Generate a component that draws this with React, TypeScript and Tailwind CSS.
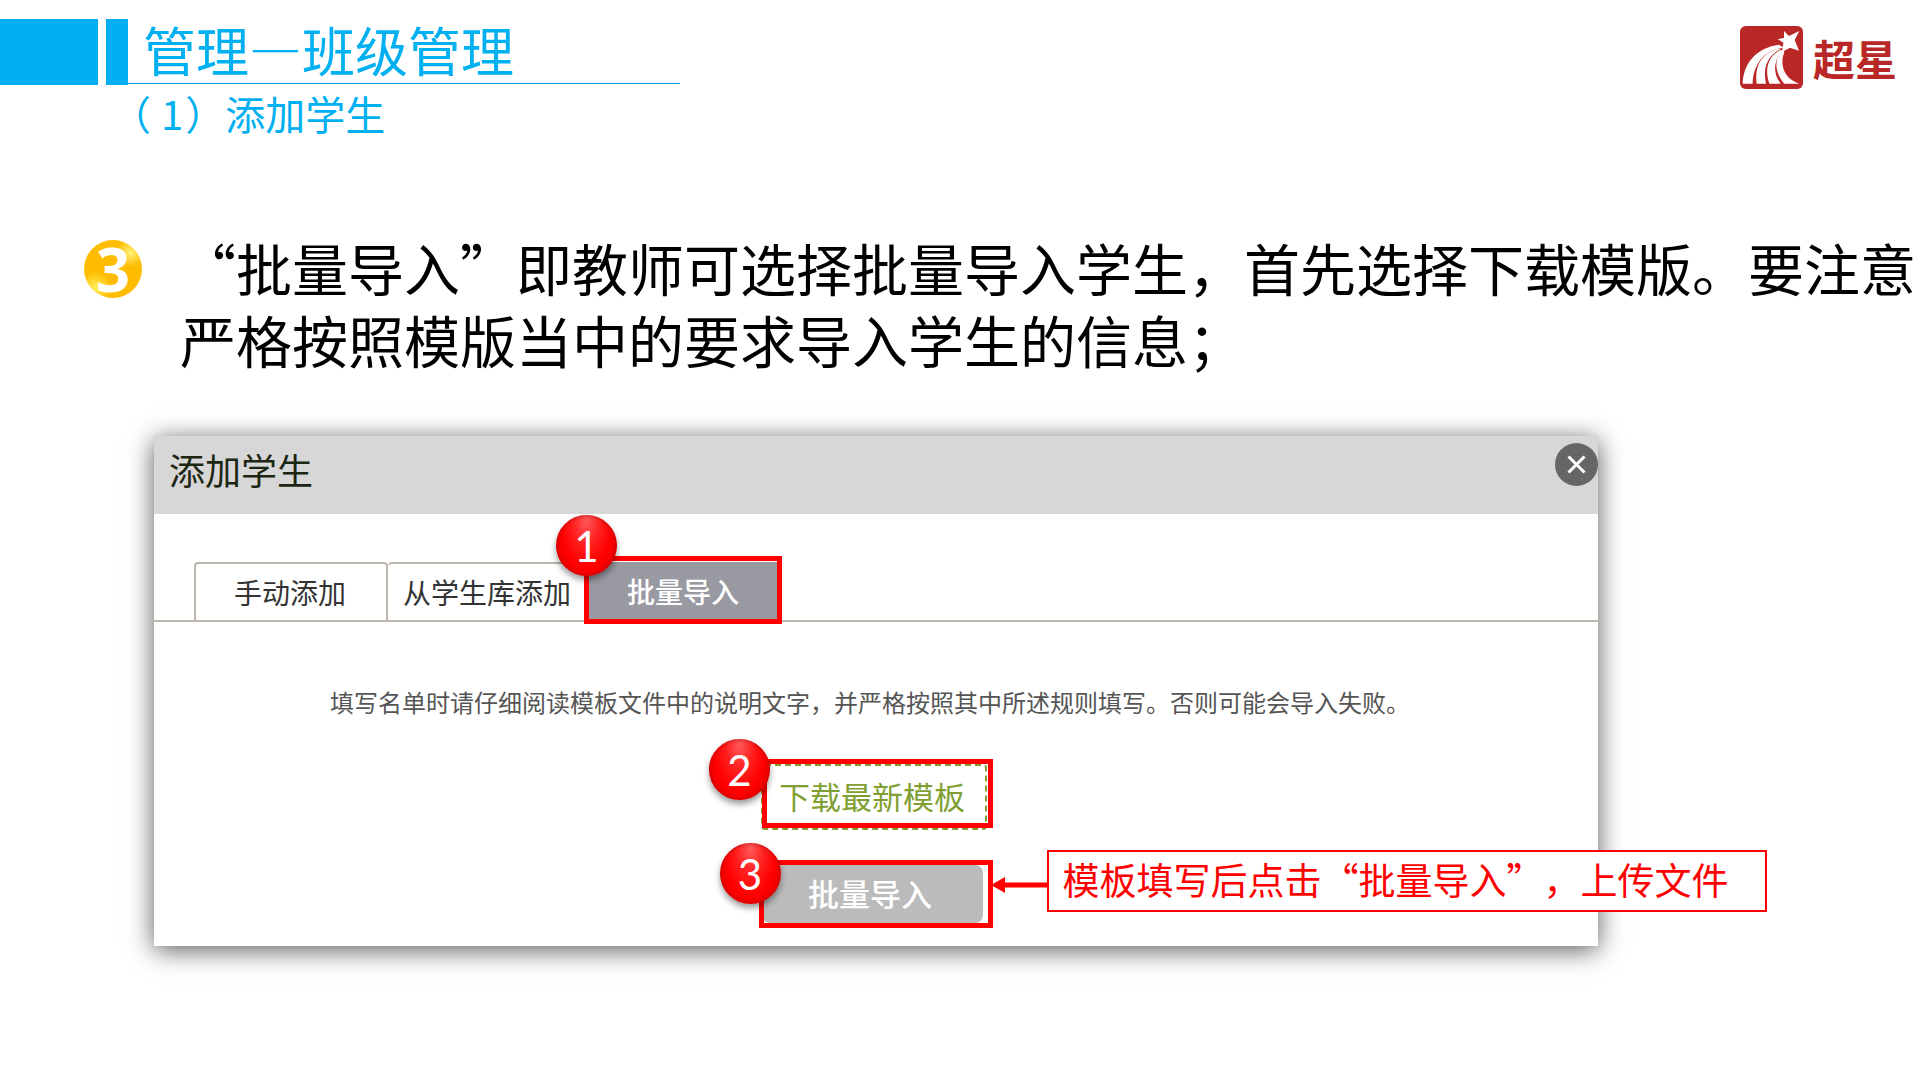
import React from 'react';

const BALL =
  'pointer-events-none absolute flex size-[61px] items-center justify-center rounded-full bg-[radial-gradient(ellipse_at_50%_8%,#ff5a5a_0%,#ff2020_32%,#ff0000_60%,#e60000_100%)] font-[Lato] text-[42px] leading-none text-white shadow-[0_4px_6px_rgba(0,0,0,0.4),inset_0_0_5px_rgba(150,0,0,0.7)]';

const FRAME = 'pointer-events-none absolute border-5 border-[#ff0000]';

function Logo() {
  return (
    <div className="mt-[7px] mr-[23px] flex items-center gap-2.5 text-[#b92827]" aria-label="超星">
      <svg className="size-[63px]" viewBox="0 0 189 189" aria-hidden="true">
        <rect width="189" height="189" rx="17" fill="#b92827" />
        <g fill="#fff">
          <path d="M132 15 L147 30 L178 15 L164 42 L177 74 L150 65 L126 78 L130 50 L113 39 L132 36 Z" />
          <path d="M8 173 C10 116 44 66 118 56 L131 66 C80 70 40 106 38 173 Z" />
          <path d="M50 173 C43 122 62 84 112 69 L121 69 C80 92 68 128 78 173 Z" />
          <path d="M88 173 C72 128 86 90 122 71 L127 76 C100 104 98 142 122 173 Z" />
          <path d="M133 173 C100 134 104 98 128 72 L133 78 C118 118 132 158 178 173 Z" />
        </g>
      </svg>
      <span className="text-[42px] leading-[63px] font-bold">超星</span>
    </div>
  );
}

function Header() {
  return (
    <header className="flex items-start justify-between pt-[19px]">
      <div>
        <div className="flex">
          <div className="h-[66px] w-[98px] bg-[#00b0f0]" />
          <div className="ml-2 h-[66px] w-[22px] bg-[#00b0f0]" />
          <h1 className="flex h-[65px] w-[552px] items-center border-b border-[#00a2dc] pb-1 pl-[15px] text-[53px] leading-[60px]">
            管理—班级管理
          </h1>
        </div>
        <h2 className="pl-[111px] text-[40px] leading-[56px]">
          （<span className="pr-0.5 pl-2.5">1</span>）添加学生
        </h2>
      </div>
      <Logo />
    </header>
  );
}

function AddStudentDialog() {
  return (
    <section
      aria-label="添加学生"
      className="mt-[61px] mr-[322px] ml-[154px] h-[510px] bg-white text-[#333] shadow-[0_4px_24px_rgba(0,0,0,0.65)]"
    >
      <div className="flex h-[78px] items-start justify-between bg-[#d7d7d7]">
        <h3 className="pl-[15px] text-[36px] leading-[66px] text-[#1c2612]">添加学生</h3>
        <button
          type="button"
          aria-label="关闭"
          className="mt-[7px] flex size-[43px] items-center justify-center rounded-full bg-[#666]"
        >
          <svg className="size-[19px]" viewBox="0 0 19 19" stroke="#fff" strokeWidth="3" aria-hidden="true">
            <path d="M1.5 1.5 L17.5 17.5 M17.5 1.5 L1.5 17.5" />
          </svg>
        </button>
      </div>

      <div role="tablist" className="mt-12 flex h-[60px] border-b-2 border-[#bdb6ab] pl-10 text-[28px] leading-none">
        <button
          type="button"
          role="tab"
          aria-selected="false"
          className="w-[194px] rounded-t-sm border-2 border-b-0 border-[#bdb6ab] pr-0.5"
        >
          手动添加
        </button>
        <button
          type="button"
          role="tab"
          aria-selected="false"
          className="w-[200px] rounded-t-sm border-t-2 border-[#bdb6ab] pr-0.5"
        >
          从学生库添加
        </button>
        <div className="relative flex">
          <button type="button" role="tab" aria-selected="true" className="w-[190px] bg-[#9899a1] font-medium text-white">
            批量导入
          </button>
          <span className={`${FRAME} -top-1.5 -right-1 -bottom-1 -left-1`} />
          <span className={`${BALL} -top-[47px] -left-8`}>1</span>
        </div>
      </div>

      <p className="mt-[62px] pr-3 text-center text-2xl leading-9 text-[#555]">
        填写名单时请仔细阅读模板文件中的说明文字，并严格按照其中所述规则填写。否则可能会导入失败。
      </p>

      <div className="mt-[44px] flex flex-col items-center gap-[35px] pr-1">
        <div className="relative">
          <a
            href="#template"
            className="flex h-[66px] w-[226px] items-center justify-center rounded border-2 border-dashed border-[#7f9f32] pr-1 pb-1 text-[31px] leading-none text-[#7f9f32]"
          >
            下载最新模板
          </a>
          <span className={`${FRAME} -top-[5px] -right-1.5 bottom-0.5 left-px`} />
          <span className={`${BALL} -top-[25px] -left-[52px]`}>2</span>
        </div>

        <div className="relative mr-1">
          <button
            type="button"
            className="flex h-[58px] w-[221px] items-center justify-center rounded-lg bg-[#bbb] pr-1 pb-1 text-[31px] leading-none font-medium text-white"
          >
            批量导入
          </button>
          <span className={`${FRAME} -top-[5px] -right-2.5 -bottom-[5px] -left-[3px]`} />
          <span className={`${BALL} -top-[22px] -left-[42px]`}>3</span>
          <div className="absolute -top-[15px] left-full flex w-max items-center pl-2">
            <svg className="mt-2 h-4 w-14" viewBox="0 0 56 16" fill="#ff0000" aria-hidden="true">
              <path d="M0 8 L14 0 V5.5 H56 V10.5 H14 V16 Z" />
            </svg>
            <p className="flex h-[62px] w-[720px] items-center border-2 border-[#ff0000] bg-white pb-1 pl-3.5 text-[37px] leading-none text-[#ff0000]">
              模板填写后点击“批量导入”，上传文件
            </p>
          </div>
        </div>
      </div>
    </section>
  );
}

export default function App() {
  return (
    <main
      lang="zh-CN"
      className="min-h-screen w-full overflow-hidden bg-white font-['Noto_Sans_CJK_SC',sans-serif] text-[#00b0f0] [text-spacing-trim:space-all]"
    >
      <Header />
      <div className="mt-[90px] flex items-start pl-[84px] text-black">
        <span className="mt-[9px] flex size-[58px] shrink-0 items-center justify-center rounded-full bg-[radial-gradient(circle_at_80%_22%,#fff27a_0%,transparent_22%),radial-gradient(circle_at_20%_82%,#fff05a_0%,transparent_24%),linear-gradient(#ffbc00,#ffbc00)] font-['Open_Sans'] text-[60px] leading-none font-bold text-white">
          3
        </span>
        <p className="ml-[38px] text-[56px] leading-[72px]">
          “批量导入”即教师可选择批量导入学生，首先选择下载模版。要注意严格按照模版当中的要求导入学生的信息；
        </p>
      </div>
      <AddStudentDialog />
    </main>
  );
}
